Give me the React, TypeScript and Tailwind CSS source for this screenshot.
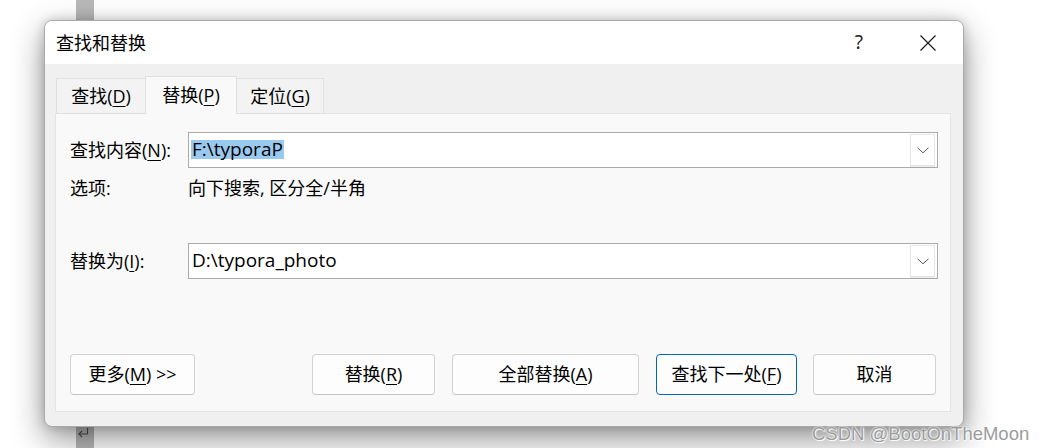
import React from "react";

const U = ({ c }: { c: string }) => <span className="underline underline-offset-[3px] decoration-1">{c}</span>;

function Chevron() {
  return (
    <div className="absolute right-[2px] top-[1px] bottom-[1px] w-[25px] bg-white border border-[#e6e6e6] shadow-[0_1px_1px_rgba(0,0,0,0.08)] flex items-center justify-center">
      <svg width="12" height="7" viewBox="0 0 12 7">
        <path d="M0.5 0.8 L6 5.8 L11.5 0.8" fill="none" stroke="#5a5a5a" strokeWidth="1" />
      </svg>
    </div>
  );
}

function Btn({ w, children, focus }: { w: string; children: React.ReactNode; focus?: boolean }) {
  return (
    <div
      className={`${w} h-[41px] rounded-[4px] bg-[#fdfdfd] flex items-center justify-center text-[18px] text-black ${
        focus ? "border border-[#0067c0]" : "border border-[#d2d2d2] border-b-[#c4c4c4]"
      }`}
    >
      {children}
    </div>
  );
}

export default function App() {
  return (
    <div className="relative w-[1043px] h-[448px] overflow-hidden bg-white pt-[20px] pl-[44px] font-[family-name:'Open_Sans','Noto_Sans_CJK_SC',sans-serif] text-black">
      {/* document background bar */}
      <div className="absolute left-[76px] top-0 bottom-0 w-[18px] bg-[#b8b8b8]" />
      <svg className="absolute left-[77px] top-[428px]" width="12" height="10" viewBox="0 0 12 10">
        <path d="M10.5 0 V6 H2" fill="none" stroke="#505050" strokeWidth="1.2" />
        <path d="M5 3 L2 6 L5 9" fill="none" stroke="#505050" strokeWidth="1.2" />
      </svg>

      {/* dialog */}
      <div className="relative z-10 w-[920px] h-[407px] rounded-[8px] border border-[#a9a9a9] bg-[#f0f0f0] overflow-hidden shadow-[0_12px_32px_rgba(0,0,0,0.42),0_0_12px_rgba(0,0,0,0.18)] flex flex-col">
        {/* title bar */}
        <div className="h-[43px] bg-white flex items-center justify-between pl-[11px] pr-[27px] shrink-0">
          <div className="text-[18px] leading-none">查找和替换</div>
          <div className="flex items-center gap-[57px]">
            <span className="text-[19px] leading-none text-[#222] font-[family-name:'Noto_Sans',sans-serif]">?</span>
            <svg width="16" height="16" viewBox="0 0 16 16">
              <path d="M0.5 0.5 L15.5 15.5 M15.5 0.5 L0.5 15.5" stroke="#1a1a1a" strokeWidth="1.2" />
            </svg>
          </div>
        </div>

        {/* body */}
        <div className="flex-1 pt-[12px] pl-[10px] pr-[12px] pb-[14px] flex flex-col">
          {/* tabs */}
          <div className="flex items-end h-[38px] -mb-px relative z-10 pl-[1px]">
            <div className="w-[90px] h-[36px] border border-[#e0e0e0] bg-[#f3f3f3] flex items-center justify-center text-[18px] leading-none">
              查找(<U c="D" />)
            </div>
            <div className="w-[92px] h-[38px] -ml-px border border-b-0 border-[#e0e0e0] bg-[#f9f9f9] flex items-center justify-center text-[18px] leading-none pb-[1px]">
              替换(<U c="P" />)
            </div>
            <div className="w-[88px] h-[36px] -ml-px border border-[#e0e0e0] bg-[#f3f3f3] flex items-center justify-center text-[18px] leading-none">
              定位(<U c="G" />)
            </div>
          </div>

          {/* panel */}
          <div className="h-[299px] border border-[#e3e3e3] bg-[#f9f9f9] pt-[18px] pl-[14px] pr-[12px] pb-[16px] flex flex-col">
            <div className="flex items-center h-[36px]">
              <div className="w-[118px] text-[18px]">
                查找内容(<U c="N" />):
              </div>
              <div className="relative flex-1 h-[36px] bg-white border border-[#ababab] flex items-center pl-[2px]">
                <span className="bg-[#99c9ef] text-[19px] leading-[19px] px-[1px] -mt-[2px]">F:\typoraP</span>
                <Chevron />
              </div>
            </div>

            <div className="flex items-center h-[24px] mt-[8px] text-[18px]">
              <div className="w-[118px]">选项:</div>
              <div>向下搜索, 区分全/半角</div>
            </div>

            <div className="flex items-center h-[36px] mt-[43px]">
              <div className="w-[118px] text-[18px]">
                替换为(<U c="I" />):
              </div>
              <div className="relative flex-1 h-[36px] bg-white border border-[#ababab] flex items-center pl-[3px]">
                <span className="text-[19px] leading-[19px] -mt-[2px]">D:\typora_photo</span>
                <Chevron />
              </div>
            </div>

            <div className="flex items-center mt-[75px] mr-[2px] justify-between">
              <Btn w="w-[125px]">
                更多(<U c="M" />) &gt;&gt;
              </Btn>
              <div className="flex items-center gap-[17px]">
                <Btn w="w-[123px]">
                  替换(<U c="R" />)
                </Btn>
                <Btn w="w-[187px]">
                  全部替换(<U c="A" />)
                </Btn>
                <div className="flex items-center gap-[16px]">
                  <Btn w="w-[141px]" focus>
                    查找下一处(<U c="F" />)
                  </Btn>
                  <Btn w="w-[123px]">取消</Btn>
                </div>
              </div>
            </div>
          </div>
        </div>
      </div>

      {/* watermark */}
      <div className="absolute z-20 left-[812px] top-[425px] text-[18.5px] leading-none text-[#9c9c9c] font-[family-name:'Liberation_Sans',sans-serif] [text-shadow:0_0_1px_#fff,0_0_2px_#fff,1px_1px_1px_#fff]">
        CSDN @BootOnTheMoon
      </div>
    </div>
  );
}
